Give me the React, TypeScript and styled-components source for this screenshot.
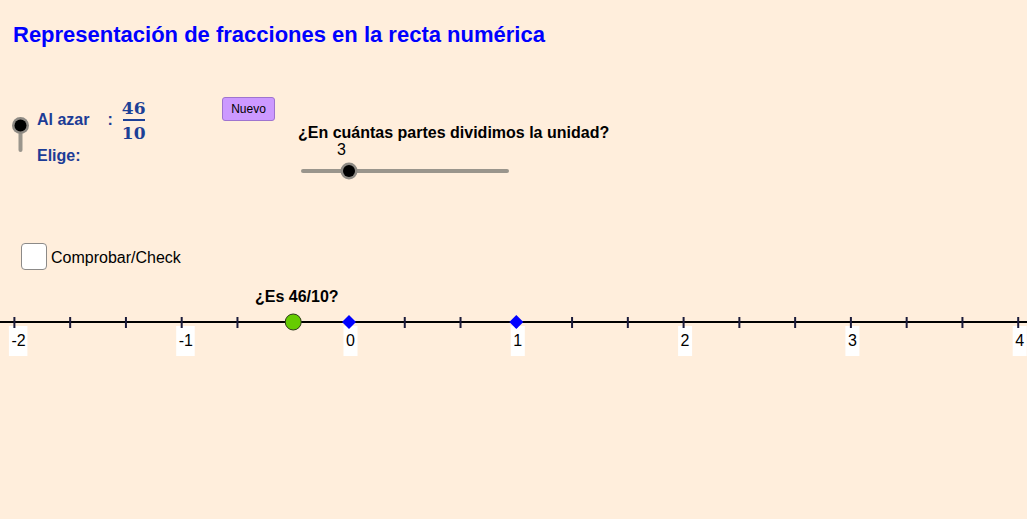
import React from "react";
import styled, { createGlobalStyle } from "styled-components";

const GlobalStyle = createGlobalStyle`
  html, body {
    margin: 0;
    padding: 0;
    background: #ffeedc;
  }
  body {
    font-family: "Liberation Sans", Arial, sans-serif;
  }
`;

const UNIT = 167.3;
const ORIGIN = 349;
const STEPS = 3;

const Page = styled.div`
  width: 1027px;
  height: 519px;
  overflow: hidden;
  background: #ffeedc;
  display: flex;
  flex-direction: column;
  color: #000;
`;

const Title = styled.h1`
  margin: 22px 0 0 13px;
  font-size: 22px;
  line-height: 26px;
  font-weight: bold;
  color: #0000ff;
`;

const Controls = styled.div`
  margin-top: 47px;
  height: 85px;
  display: flex;
  align-items: flex-start;
`;

const Toggle = styled.svg`
  margin: 22px 0 0 12px;
  flex: none;
`;

const Choice = styled.div`
  margin: 4px 0 0 8px;
  width: 185px;
  display: flex;
  flex-direction: column;
`;

const ChoiceRow = styled.div`
  display: flex;
  align-items: center;
`;

const ChoiceLabel = styled.span<{ $gap?: number }>`
  font-size: 16px;
  line-height: 18px;
  font-weight: bold;
  color: #1c3c96;
  margin-left: ${(p) => p.$gap ?? 0}px;
`;

const Elige = styled(ChoiceLabel)`
  margin-top: 5px;
`;

const Fraction = styled.span`
  margin-left: 9px;
  display: inline-flex;
  flex-direction: column;
  align-items: center;
  font-family: "DejaVu Serif", "Liberation Serif", serif;
  font-weight: bold;
  font-size: 17px;
  line-height: 18px;
  color: #1c4096;
`;

const Rule = styled.span`
  width: 22px;
  height: 1.5px;
  background: #1c4096;
  margin: 2px 0 3px;
`;

const NewButton = styled.button`
  margin-top: 2px;
  width: 53px;
  height: 24px;
  padding: 0;
  background: #cc99ff;
  border: 1px solid #9f74cf;
  border-radius: 3px;
  font-family: "Liberation Sans", Arial, sans-serif;
  font-size: 12px;
  color: #000;
  flex: none;
`;

const Question = styled.div`
  margin: 29px 0 0 23px;
  display: flex;
  flex-direction: column;
`;

const QuestionText = styled.span`
  font-size: 16px;
  line-height: 18px;
  font-weight: bold;
`;

const SliderValue = styled.span`
  margin: -1px 0 0 39px;
  font-size: 16px;
  line-height: 18px;
`;

const SliderSvg = styled.svg`
  margin-left: 1px;
  display: block;
`;

const CheckRow = styled.label`
  margin: 63px 0 0 21px;
  display: flex;
  align-items: center;
`;

const CheckBox = styled.span`
  width: 24px;
  height: 25px;
  background: #fff;
  border: 1px solid #8c8a88;
  border-radius: 4px;
  flex: none;
`;

const CheckText = styled.span`
  margin: 2px 0 0 4px;
  font-size: 16px;
  line-height: 18px;
`;

const PointLabel = styled.div`
  margin: 18px 0 0 255px;
  font-size: 16px;
  line-height: 18px;
  font-weight: bold;
`;

const Axis = styled.svg`
  display: block;
  flex: none;
`;

const Knob = ({ cx, cy }: { cx: number; cy: number }) => (
  <>
    <circle cx={cx} cy={cy} r={8.5} fill="#8e8a84" />
    <circle cx={cx} cy={cy} r={6} fill="#000" />
  </>
);

const NumberLine = () => {
  const ticks: number[] = [];
  for (let i = -2 * STEPS; i <= 4 * STEPS; i++) ticks.push(ORIGIN + (i * UNIT) / STEPS);
  const labels = [-2, -1, 0, 1, 2, 3, 4];
  const y = 16;
  return (
    <Axis width={1027} height={54} viewBox="0 0 1027 54">
      {labels.map((n) => {
        const x = ORIGIN + n * UNIT;
        const w = n < 0 ? 18.5 : 14;
        return <rect key={"b" + n} x={x - 5.5} y={20} width={w} height={30} fill="#fff" />;
      })}
      <line x1={0} y1={y} x2={1027} y2={y} stroke="#000" strokeWidth={2} />
      {ticks.map((x, i) => (
        <line key={i} x1={x} y1={y - 5} x2={x} y2={y + 6} stroke="#1a1a3a" strokeWidth={2} />
      ))}
      {labels.map((n) => {
        const x = ORIGIN + n * UNIT;
        return (
          <text
            key={"t" + n}
            x={x - 3}
            y={40}
            fontFamily="Liberation Sans, Arial, sans-serif"
            fontSize={16}
            fill="#000"
          >
            {n < 0 ? "-" + Math.abs(n) : n}
          </text>
        );
      })}
      {[0, 1].map((n) => {
        const x = ORIGIN + n * UNIT;
        return (
          <polygon
            key={"d" + n}
            points={`${x},${y - 7} ${x + 7},${y} ${x},${y + 7} ${x - 7},${y}`}
            fill="#0000ff"
          />
        );
      })}
      <circle cx={ORIGIN - UNIT / 3} cy={y} r={8} fill="#66cc00" stroke="#2d3a1a" strokeWidth={1} />
    </Axis>
  );
};

export default function App() {
  return (
    <Page>
      <GlobalStyle />
      <Title>Representación de fracciones en la recta numérica</Title>
      <Controls>
        <Toggle width={17} height={38} viewBox="0 0 17 38">
          <line x1={8.5} y1={8} x2={8.5} y2={33} stroke="#9a958c" strokeWidth={4} strokeLinecap="round" />
          <Knob cx={8.5} cy={8.5} />
        </Toggle>
        <Choice>
          <ChoiceRow>
            <ChoiceLabel>Al azar</ChoiceLabel>
            <ChoiceLabel $gap={18}>:</ChoiceLabel>
            <Fraction>
              <span>46</span>
              <Rule />
              <span>10</span>
            </Fraction>
          </ChoiceRow>
          <Elige>Elige:</Elige>
        </Choice>
        <NewButton>Nuevo</NewButton>
        <Question>
          <QuestionText>¿En cuántas partes dividimos la unidad?</QuestionText>
          <SliderValue>3</SliderValue>
          <SliderSvg width={212} height={24} viewBox="0 0 212 24">
            <line x1={4} y1={12} x2={208} y2={12} stroke="#9a958c" strokeWidth={4} strokeLinecap="round" />
            <Knob cx={50} cy={12} />
          </SliderSvg>
        </Question>
      </Controls>
      <CheckRow>
        <CheckBox />
        <CheckText>Comprobar/Check</CheckText>
      </CheckRow>
      <PointLabel>¿Es 46/10?</PointLabel>
      <NumberLine />
    </Page>
  );
}
